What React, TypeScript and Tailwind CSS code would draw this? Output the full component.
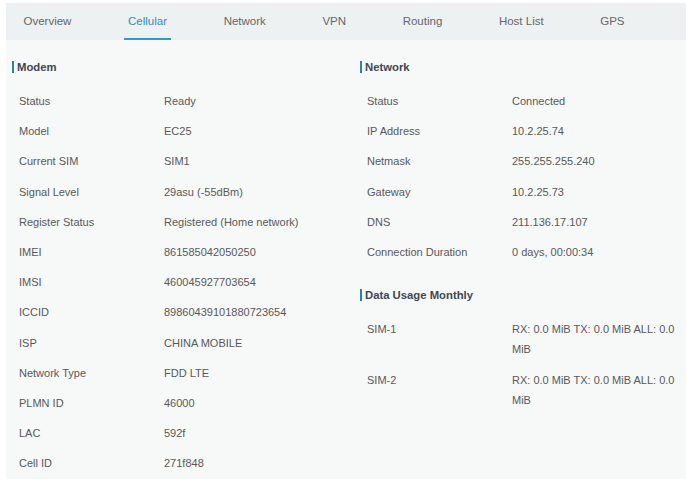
import React from 'react';

const tabs = ['Overview', 'Cellular', 'Network', 'VPN', 'Routing', 'Host List', 'GPS'];

const modem: [string, string][] = [
    ['Status', 'Ready'],
    ['Model', 'EC25'],
    ['Current SIM', 'SIM1'],
    ['Signal Level', '29asu (-55dBm)'],
    ['Register Status', 'Registered (Home network)'],
    ['IMEI', '861585042050250'],
    ['IMSI', '460045927703654'],
    ['ICCID', '89860439101880723654'],
    ['ISP', 'CHINA MOBILE'],
    ['Network Type', 'FDD LTE'],
    ['PLMN ID', '46000'],
    ['LAC', '592f'],
    ['Cell ID', '271f848'],
];

const network: [string, string][] = [
    ['Status', 'Connected'],
    ['IP Address', '10.2.25.74'],
    ['Netmask', '255.255.255.240'],
    ['Gateway', '10.2.25.73'],
    ['DNS', '211.136.17.107'],
    ['Connection Duration', '0 days, 00:00:34'],
];

const usage: [string, string][] = [
    ['SIM-1', 'RX: 0.0 MiB TX: 0.0 MiB ALL: 0.0 MiB'],
    ['SIM-2', 'RX: 0.0 MiB TX: 0.0 MiB ALL: 0.0 MiB'],
];

function Header({ title, top = 'pt-[20px]' }: { title: string; top?: string }) {
    return (
        <div className={`${top} pb-[12px] pl-[6px]`}>
            <div className="flex items-center gap-[3px] h-[14px]">
                <span className="w-[2px] h-[12px] bg-[#1f87b3]" />
                <span className="font-bold text-[11.3px] leading-[14px] text-[#3e4852]">{title}</span>
            </div>
        </div>
    );
}

function Rows({ rows }: { rows: [string, string][] }) {
    return (
        <div className="pl-[13px]">
            {rows.map(([label, value]) => (
                <div key={label} className="flex py-[5px] text-[11px] leading-[20.2px] text-[#585858]">
                    <div className="w-[145px] shrink-0">{label}</div>
                    <div className="w-[170px]">{value}</div>
                </div>
            ))}
        </div>
    );
}

export default function App() {
    return (
        <div className="w-[692px] h-[489px] bg-white pt-[3px] px-[6px]" style={{ fontFamily: '"Liberation Sans", Arial, sans-serif' }}>
            <div className="bg-[#f7f8f8] h-[476px]">
                <div className="h-[37px] bg-[#eef1f2] flex pl-[13.5px] gap-[48.6px]">
                    {tabs.map((t) => (
                        <div
                            key={t}
                            className={
                                t === 'Cellular'
                                    ? 'px-[4px] h-full flex items-center text-[11.5px] text-[#2a8fc4] border-b-2 border-[#2a9bd0] pt-[2px]'
                                    : 'px-[4px] h-full flex items-center text-[11.5px] text-[#666] border-b-2 border-transparent pt-[2px]'
                            }
                        >
                            {t}
                        </div>
                    ))}
                </div>
                <div className="flex">
                    <div className="w-[348px]">
                        <Header title="Modem" />
                        <Rows rows={modem} />
                    </div>
                    <div className="w-[332px]">
                        <Header title="Network" />
                        <Rows rows={network} />
                        <Header title="Data Usage Monthly" top="pt-[21px]" />
                        <Rows rows={usage} />
                    </div>
                </div>
            </div>
        </div>
    );
}
